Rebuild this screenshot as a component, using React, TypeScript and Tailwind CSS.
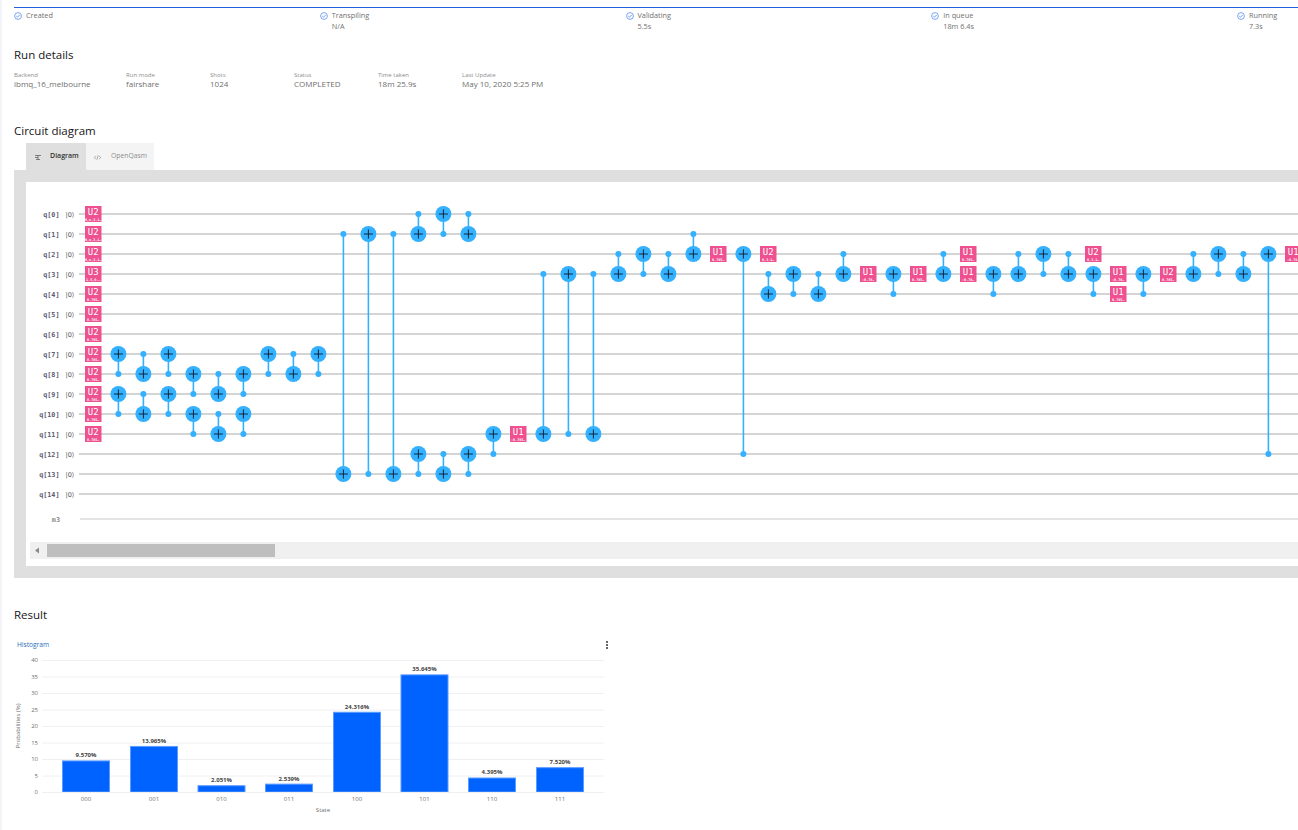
import React from "react";

const SANS = "font-['Open_Sans','Noto_Sans',sans-serif]";
const qy = (n: number) => 214 + 20 * n;

// [column x, target qubit, control qubit]
const cx: [number, number, number][] = [
  [118, 7, 8], [118, 9, 10], [143, 8, 7], [143, 10, 9], [168, 7, 8], [168, 9, 10],
  [193, 8, 9], [193, 10, 11], [218, 9, 8], [218, 11, 10], [243, 8, 9], [243, 10, 11],
  [268, 7, 8], [293, 8, 7], [318, 7, 8], [343, 13, 1], [368, 1, 13], [393, 13, 1],
  [418, 1, 0], [418, 12, 13], [443, 0, 1], [443, 13, 12], [468, 1, 0], [468, 12, 13],
  [493, 11, 12], [543, 11, 3], [568, 3, 11], [593, 11, 3], [618, 3, 2], [643, 2, 3],
  [668, 3, 2], [693, 2, 1], [743, 2, 12], [768, 4, 3], [793, 3, 4], [818, 4, 3],
  [843, 3, 2], [893, 3, 4], [943, 3, 2], [993, 3, 4], [1018, 3, 2], [1043, 2, 3],
  [1068, 3, 2], [1093, 3, 4], [1143, 3, 4], [1193, 3, 2], [1218, 2, 3], [1243, 3, 2],
  [1268, 2, 12],
];

// [column x, qubit, name, params]
const boxes: [number, number, string, string][] = [
  [93, 0, "U2", "0,π,3.1…"], [93, 1, "U2", "0,π,3.1…"], [93, 2, "U2", "0,π,3.1…"], [93, 3, "U3", "1.5,0.…"],
  [93, 4, "U2", "0.785…"], [93, 5, "U2", "0.785…"], [93, 6, "U2", "0.785…"], [93, 7, "U2", "0.785…"],
  [93, 8, "U2", "0.785…"], [93, 9, "U2", "0.785…"], [93, 10, "U2", "0.785…"], [93, 11, "U2", "0.785…"],
  [518, 11, "U1", "-0.785…"], [718, 2, "U1", "0.785…"], [768, 2, "U2", "0,3.1…"], [868, 3, "U1", "-0.78…"],
  [918, 3, "U1", "0.785…"], [968, 2, "U1", "0.785…"], [968, 3, "U1", "-0.78…"], [1093, 2, "U2", "0,3.1…"],
  [1118, 3, "U1", "-0.78…"], [1118, 4, "U1", "0.785…"], [1168, 3, "U2", "0.785…"], [1293, 2, "U1", "-0.78…"],
];

const steps = [
  ["Created", ""],
  ["Transpiling", "N/A"],
  ["Validating", "5.5s"],
  ["In queue", "18m 6.4s"],
  ["Running", "7.3s"],
];

const details: [string, string, string][] = [
  ["Backend", "ibmq_16_melbourne", "w-[112px]"],
  ["Run mode", "fairshare", "w-[84px]"],
  ["Shots", "1024", "w-[84px]"],
  ["Status", "COMPLETED", "w-[84px]"],
  ["Time taken", "18m 25.9s", "w-[84px]"],
  ["Last Update", "May 10, 2020 5:25 PM", "w-[120px]"],
];

const bars: [string, number, number][] = [
  ["000", 9.57, 62], ["001", 13.965, 130], ["010", 2.051, 197.5], ["011", 2.539, 265],
  ["100", 24.316, 333], ["101", 35.645, 400.5], ["110", 4.395, 468], ["111", 7.52, 536],
];
const labels = ["9.570%", "13.965%", "2.051%", "2.539%", "24.316%", "35.645%", "4.395%", "7.520%"];

function StepIcon() {
  return (
    <svg width="8" height="8" viewBox="0 0 8 8" fill="none" className="shrink-0 mt-[2px]">
      <circle cx="4" cy="4" r="3.4" stroke="#5b8ff0" strokeWidth="0.8" />
      <path d="M2.3 4.1 L3.5 5.2 L5.7 2.9" stroke="#4a80ea" strokeWidth="0.8" />
    </svg>
  );
}

function Circuit() {
  const mono = "'DejaVu Sans Mono', monospace";
  return (
    <svg viewBox="26 182 1272 360" width="1272" height="360" className="block">
      {Array.from({ length: 15 }, (_, i) => (
        <g key={i}>
          <line x1="79" x2="1298" y1={qy(i)} y2={qy(i)} stroke="#d4d4d4" strokeWidth="2" />
          <text x="59.5" y={qy(i) + 2.5} textAnchor="end" fontFamily={mono} fontSize="6.75" fontWeight="700" fill="#5c5c72">
            {`q[${i}]`}
          </text>
          <text x="65.5" y={qy(i) + 2.5} fontFamily="'DejaVu Sans', sans-serif" fontSize="6.5" fill="#555">
            |0⟩
          </text>
        </g>
      ))}
      <line x1="80" x2="1298" y1="519" y2="519" stroke="#e4e4e4" strokeWidth="2" />
      <text x="60" y="521.5" textAnchor="end" fontFamily={mono} fontSize="6.75" fontWeight="700" fill="#8c8c8c">
        m3
      </text>

      {cx.map(([col, t, c], i) => {
        const x = col + 0.4;
        return (
          <g key={i}>
            <line x1={x} x2={x} y1={qy(t)} y2={qy(c)} stroke="#33b1ff" strokeWidth="1.6" />
            <circle cx={x} cy={qy(c)} r="3" fill="#33b1ff" />
            <circle cx={x} cy={qy(t)} r="8" fill="#33b1ff" />
            <path d={`M${x - 4.5} ${qy(t)} H${x + 4.5} M${x} ${qy(t) - 4.5} V${qy(t) + 4.5}`} stroke="#10243a" strokeWidth="1" />
          </g>
        );
      })}

      {boxes.map(([x, q, name, params], i) => (
        <g key={i}>
          <rect x={x - 8} y={qy(q) - 8} width="16.5" height="16" fill="#ee5090" />
          <text x={x + 0.2} y={qy(q) + 1} textAnchor="middle" fontFamily={mono} fontSize="9" fill="#fff">
            {name}
          </text>
          <text x={x + 0.2} y={qy(q) + 6.8} textAnchor="middle" fontFamily={mono} fontSize="3.4" fontWeight="700" fill="#fff">
            {params}
          </text>
        </g>
      ))}
    </svg>
  );
}

function Histogram() {
  const font = "'Open Sans', sans-serif";
  const y = (v: number) => 792 - v * 3.3;
  return (
    <svg viewBox="14 652 600 166" width="600" height="166" className="block">
      {[0, 5, 10, 15, 20, 25, 30, 35, 40].map((v) => (
        <g key={v}>
          <line x1="42" x2="604" y1={y(v) + 0.5} y2={y(v) + 0.5} stroke="#f0f0f0" strokeWidth="1" />
          <text x="38" y={y(v) + 2.2} textAnchor="end" fontFamily={font} fontSize="6" fill="#6f6f6f">
            {v}
          </text>
        </g>
      ))}
      {bars.map(([name, v, x], i) => (
        <g key={name}>
          <rect x={x + 0.5} y={y(v) + 0.5} width="47" height={v * 3.3 - 0.5} fill="#0062ff" stroke="#5c9cff" strokeWidth="1" />
          <rect x={x} y="792" width="48" height="1" fill="#f0f0f0" />
          <text x={x + 24} y={y(v) - 3} textAnchor="middle" fontFamily={font} fontSize="6" fontWeight="700" fill="#444">
            {labels[i]}
          </text>
          <text x={x + 24} y="800.5" textAnchor="middle" fontFamily={font} fontSize="6" fill="#6f6f6f">
            {name}
          </text>
        </g>
      ))}
      <text x="323" y="812" textAnchor="middle" fontFamily={font} fontSize="6" fill="#6f6f6f">
        State
      </text>
      <text transform="translate(20 726) rotate(-90)" textAnchor="middle" fontFamily={font} fontSize="6" fill="#6f6f6f">
        Probabilities (%)
      </text>
    </svg>
  );
}

export default function App() {
  return (
    <div className={`flex h-[830px] w-[1298px] overflow-hidden bg-white ${SANS}`}>
      <div className="w-[2px] shrink-0 bg-[#f4f4f8]" />
      <main className="min-w-0 flex-1 overflow-hidden pl-3">
        {/* Status stepper */}
        <section className="mt-[7px] h-[31px] border-t border-[#1f62e0] pt-[2px]">
          <ol className="grid grid-cols-[repeat(5,305.75px)]">
            {steps.map(([name, time]) => (
              <li key={name} className="flex gap-1 text-[7.3px] leading-[11px] text-[#6f6f6f]">
                <StepIcon />
                <div>
                  <p>{name}</p>
                  {time && <p>{time}</p>}
                </div>
              </li>
            ))}
          </ol>
        </section>

        {/* Run details */}
        <h2 className="mt-[8px] text-[11.5px] leading-[18px] text-[#161616]">Run details</h2>
        <dl className="mt-[7px] flex h-[47px]">
          {details.map(([label, value, w]) => (
            <div key={label} className={w}>
              <dt className="text-[6px] leading-[8px] text-[#8d8d8d]">{label}</dt>
              <dd className="whitespace-nowrap text-[8px] leading-[10px] text-[#6f6f6f]">{value}</dd>
            </div>
          ))}
        </dl>

        {/* Circuit diagram */}
        <h2 className="mt-[4px] text-[11.5px] leading-[18px] text-[#161616]">Circuit diagram</h2>
        <div className="ml-3 mt-[3px] flex h-[27px]">
          <div className="flex w-[60px] items-center gap-[9px] bg-[#dfdfdf] pl-[9px] text-[7px] font-semibold text-[#333]">
            <svg width="6" height="7" viewBox="0 0 6 7" fill="none" stroke="#555" strokeWidth="0.7" className="mt-[1px]">
              <path d="M0 1.5H6M0 3.5H3M3 1.5V5.5M1 5.5H5" />
            </svg>
            Diagram
          </div>
          <div className="flex w-[68px] items-center gap-[10px] bg-[#f4f4f4] pl-[8px] text-[6.8px] text-[#8d8d8d]">
            <svg width="7" height="5" viewBox="0 0 7 5" fill="none" stroke="#777" strokeWidth="0.6" className="mt-[1px]">
              <path d="M1.8 0.8 L0.4 2.5 L1.8 4.2 M5.2 0.8 L6.6 2.5 L5.2 4.2 M4.2 0.4 L2.8 4.6" />
            </svg>
            OpenQasm
          </div>
        </div>
        <section className="bg-[#dfdfdf] pb-3 pl-3 pt-3">
          <div className="h-[384px] bg-white">
            <Circuit />
            <div className="ml-1 flex h-[17px] items-center bg-[#f0f0f0]">
              <svg width="17" height="17" viewBox="0 0 17 17" className="shrink-0">
                <path d="M5 8.5 L9 5.5 V11.5 Z" fill="#8a8a8a" />
              </svg>
              <div className="h-[13px] w-[228px] bg-[#bebebe]" />
            </div>
          </div>
        </section>

        {/* Result */}
        <h2 className="mt-[28px] text-[11.5px] leading-[18px] text-[#161616]">Result</h2>
        <div className="mt-[14px] w-[600px]">
          <div className="flex h-[14px] items-center justify-between pl-[3px]">
            <span className="text-[6.6px] text-[#2a6db8]">Histogram</span>
            <div className="flex flex-col gap-[1px] pr-[6px]">
              <span className="h-[2px] w-[2px] bg-[#666]" />
              <span className="h-[2px] w-[2px] bg-[#666]" />
              <span className="h-[2px] w-[2px] bg-[#666]" />
            </div>
          </div>
          <Histogram />
        </div>
      </main>
    </div>
  );
}
